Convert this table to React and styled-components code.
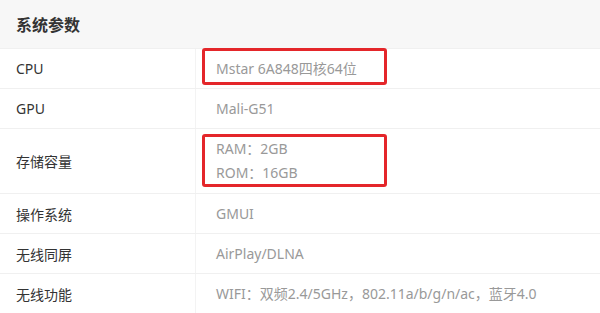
import React from "react";
import styled, { createGlobalStyle } from "styled-components";

const GlobalStyle = createGlobalStyle`
  body {
    margin: 0;
    background: #fff;
    font-family: "Noto Sans", "Noto Sans CJK SC", sans-serif;
  }
`;

const Panel = styled.section`
  width: 600px;
  overflow: hidden;
`;

const Title = styled.h3`
  margin: 0;
  height: 49px;
  padding: 0 16px;
  display: flex;
  align-items: center;
  background: #f7f7f7;
  border-bottom: 1px solid #f0f0f0;
  box-sizing: border-box;
  font-size: 16px;
  font-weight: 700;
  color: #333;
`;

const Row = styled.div`
  display: grid;
  grid-template-columns: 196px 1fr;
  min-height: ${(p) => (p.$tall ? 65 : 40)}px;
  border-bottom: 1px solid #f0f0f0;
  box-sizing: border-box;
`;

const Label = styled.div`
  display: flex;
  align-items: center;
  padding-left: 16px;
  border-right: 1px solid #f3f3f3;
  font-size: 14px;
  color: #333;
`;

const Value = styled.div`
  display: flex;
  flex-direction: column;
  justify-content: center;
  padding-left: 20px;
  font-size: 14px;
  line-height: 24px;
  color: #999;
`;

const Highlight = styled.div`
  position: relative;
  &::after {
    content: "";
    position: absolute;
    left: -14px;
    width: 185px;
    top: ${(p) => p.$top}px;
    bottom: ${(p) => p.$bottom}px;
    border: 3px solid #e4262a;
    border-radius: 3px;
    box-sizing: border-box;
  }
`;

const specs = [
  { label: "CPU", values: ["Mstar 6A848四核64位"], box: { top: -9, bottom: -4 } },
  { label: "GPU", values: ["Mali-G51"] },
  { label: "存储容量", values: ["RAM：2GB", "ROM：16GB"], tall: true, box: { top: -3, bottom: -2 } },
  { label: "操作系统", values: ["GMUI"] },
  { label: "无线同屏", values: ["AirPlay/DLNA"] },
  { label: "无线功能", values: ["WIFI：双频2.4/5GHz，802.11a/b/g/n/ac，蓝牙4.0"] },
];

export default function App() {
  return (
    <Panel>
      <GlobalStyle />
      <Title>系统参数</Title>
      {specs.map((s) => (
        <Row key={s.label} $tall={s.tall}>
          <Label>{s.label}</Label>
          <Value>
            {s.box ? (
              <Highlight $top={s.box.top} $bottom={s.box.bottom}>
                {s.values.map((v) => (
                  <div key={v}>{v}</div>
                ))}
              </Highlight>
            ) : (
              s.values.map((v) => <div key={v}>{v}</div>)
            )}
          </Value>
        </Row>
      ))}
    </Panel>
  );
}
